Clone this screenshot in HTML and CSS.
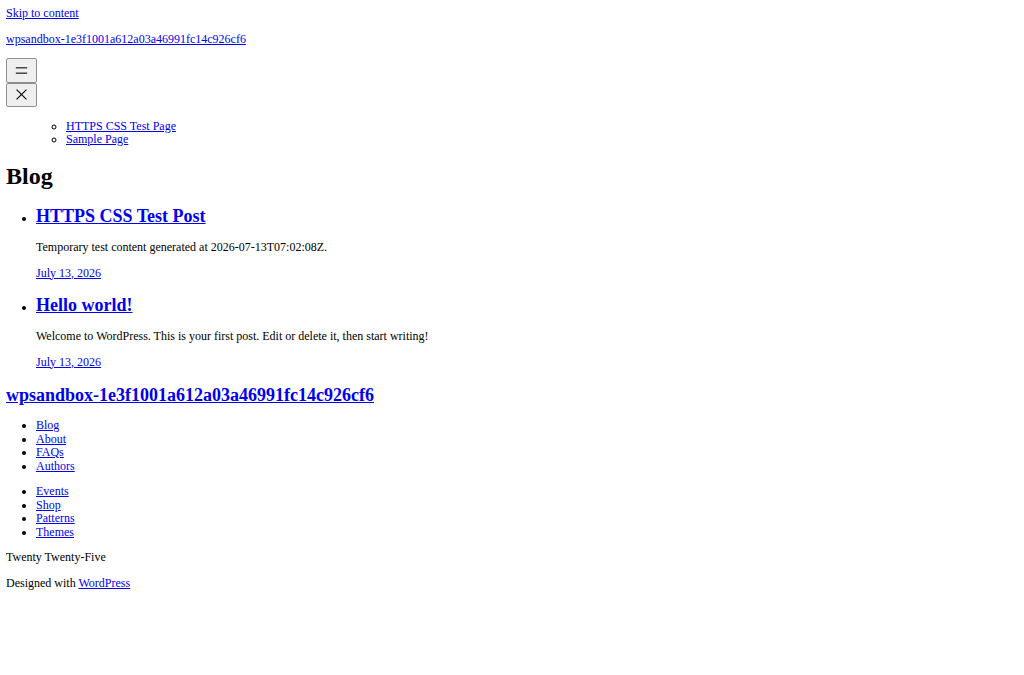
FILE: index.html
```html
<!DOCTYPE html>
<html lang="en">
<head>
<meta charset="utf-8">
<title>Blog – wpsandbox-1e3f1001a612a03a46991fc14c926cf6</title>
<link rel="stylesheet" href="styles.css">
</head>
<body class="page">
<a class="skip-link" href="#main">Skip to content</a>
<div class="site-blocks">
<header class="site-header">
  <p class="site-title"><a href="#">wpsandbox-1e3f1001a612a03a46991fc14c926cf6</a></p>
  <nav class="site-nav">
    <button class="nav-button" aria-label="Open menu"><svg class="nav-icon" viewBox="0 0 24 24" aria-hidden="true"><path d="M4 7.5h16v1.5H4z"></path><path d="M4 15h16v1.5H4z"></path></svg></button>
    <div class="nav-container">
      <div class="nav-close-wrap">
        <div class="nav-dialog">
          <button class="nav-button" aria-label="Close menu"><svg class="nav-icon" viewBox="0 0 24 24" aria-hidden="true"><path d="m13.06 12 6.47-6.47-1.06-1.06L12 10.94 5.53 4.47 4.47 5.53 10.94 12l-6.47 6.47 1.06 1.06L12 13.06l6.47 6.47 1.06-1.06L13.06 12Z"></path></svg></button>
          <div class="nav-content">
            <ul class="list nav-list"><ul class="list page-list"><li><a href="#">HTTPS CSS Test Page</a></li><li><a href="#">Sample Page</a></li></ul></ul>
          </div>
        </div>
      </div>
    </div>
  </nav>
</header>
<main class="site-main" id="main">
  <h1 class="query-title">Blog</h1>
  <div class="query">
    <ul class="list post-list">
      <li class="post">
        <h2 class="post-title"><a href="#">HTTPS CSS Test Post</a></h2>
        <div class="post-excerpt"><p class="text">Temporary test content generated at 2026-07-13T07:02:08Z.</p></div>
        <div class="post-date"><time datetime="2026-07-13"><a href="#">July 13, 2026</a></time></div>
      </li>
      <li class="post">
        <h2 class="post-title"><a href="#">Hello world!</a></h2>
        <div class="post-excerpt"><p class="text">Welcome to WordPress. This is your first post. Edit or delete it, then start writing!</p></div>
        <div class="post-date"><time datetime="2026-07-13"><a href="#">July 13, 2026</a></time></div>
      </li>
    </ul>
  </div>
</main>
<footer class="site-footer">
  <h2 class="footer-title"><a href="#">wpsandbox-1e3f1001a612a03a46991fc14c926cf6</a></h2>
  <nav class="footer-nav">
    <ul class="list footer-list"><li><a href="#">Blog</a></li><li><a href="#">About</a></li><li><a href="#">FAQs</a></li><li><a href="#">Authors</a></li></ul>
  </nav>
  <nav class="footer-nav">
    <ul class="list footer-list"><li><a href="#">Events</a></li><li><a href="#">Shop</a></li><li><a href="#">Patterns</a></li><li><a href="#">Themes</a></li></ul>
  </nav>
  <p class="text">Twenty Twenty-Five</p>
  <p class="text">Designed with <a href="#">WordPress</a></p>
</footer>
</div>
</body>
</html>
```

FILE: styles.css
```css
html {
  background: #ffffff;
}

.page {
  margin: 7px 6px 6px;
  font-family: "Liberation Serif", "Times New Roman", serif;
  font-size: 12px;
  line-height: 13.5px;
  color: #000000;
}

.page a {
  color: #0000ee;
}

.text,
.site-title {
  margin: 12px 0;
}

.list {
  margin: 12px 0;
  padding-left: 30px;
}

.list .list {
  margin: 0;
}

.nav-list {
  margin-top: 12.5px;
}

.query-title {
  font-size: 24px;
  line-height: 27.5px;
  margin: 16px 0;
}

.post-title {
  font-size: 18px;
  line-height: 20px;
  margin: 15px 0;
}

.footer-title {
  font-size: 18px;
  line-height: 21px;
  margin: 16px 0 13px;
}

.nav-button {
  box-sizing: border-box;
  width: 31px;
  height: 24.5px;
  margin: 0;
  padding: 0;
  display: flex;
  align-items: center;
  justify-content: center;
  background: #efefef;
  border: 1px solid #8f8f8f;
  border-radius: 2px;
  color: #000000;
}

.nav-icon {
  width: 17px;
  height: 17px;
  fill: currentColor;
}
```
